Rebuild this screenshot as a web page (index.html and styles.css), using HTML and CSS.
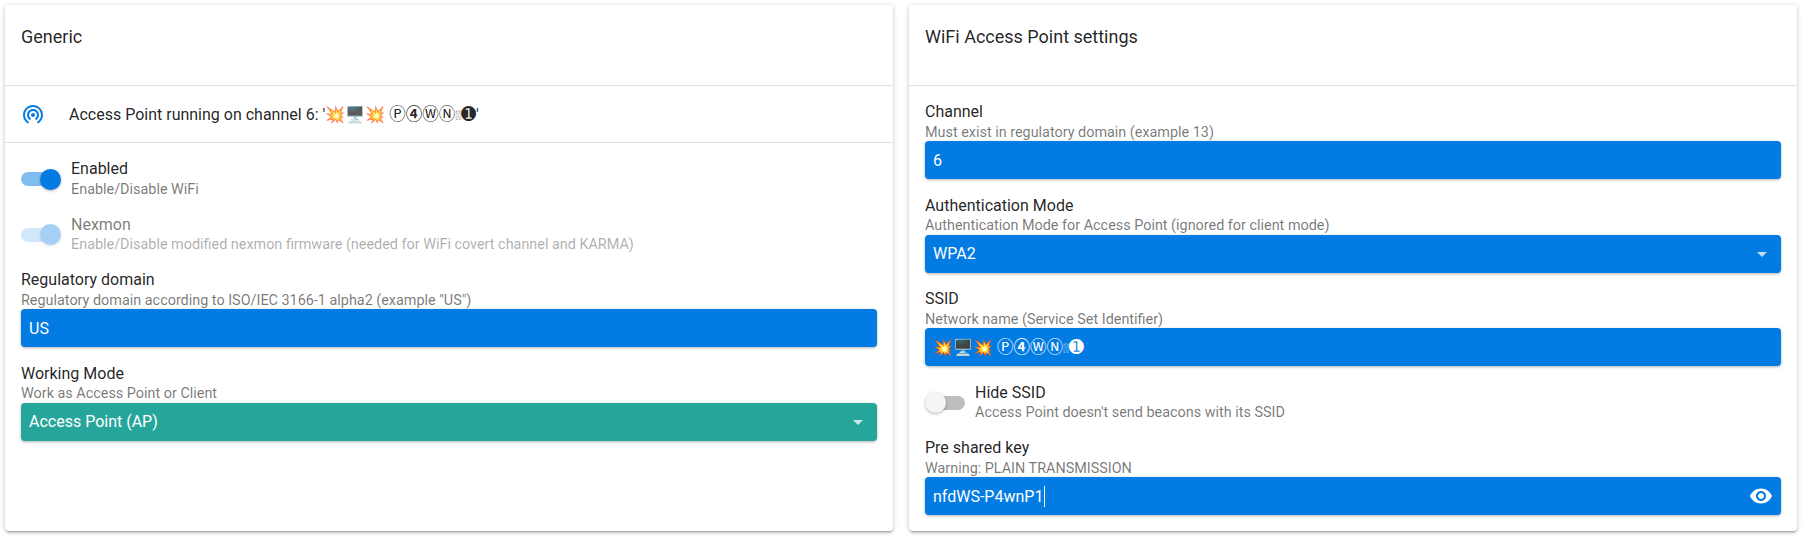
FILE: index.html
```html
<!DOCTYPE html>
<html lang="en">
<head>
<meta charset="utf-8">
<title>WiFi settings</title>
<link rel="stylesheet" href="styles.css">
</head>
<body>
<main class="page">
  <section class="card">
    <header class="card-head">Generic</header>
    <div class="status">
      <svg class="status-icon" viewBox="0 0 24 24"><path d="M12 11c-1.1 0-2 .9-2 2s.9 2 2 2 2-.9 2-2-.9-2-2-2zm6 2c0-3.31-2.69-6-6-6s-6 2.69-6 6c0 2.22 1.21 4.15 3 5.19l1-1.74c-1.19-.7-2-1.97-2-3.45 0-2.21 1.79-4 4-4s4 1.79 4 4c0 1.48-.81 2.75-2 3.45l1 1.74c1.79-1.04 3-2.97 3-5.19zM12 3C6.48 3 2 7.48 2 13c0 3.7 2.01 6.92 4.99 8.65l1-1.73C5.61 18.53 4 15.96 4 13c0-4.42 3.58-8 8-8s8 3.58 8 8c0 2.96-1.61 5.53-4 6.92l1 1.73c2.99-1.73 5-4.95 5-8.65 0-5.52-4.48-10-10-10z"/></svg>
      <span class="status-text">Access Point running on channel 6: '💥🖥️💥 <span class="circled">Ⓟ<b>④</b>ⓌⓃ</span><span class="tofu">&#x2FFFF;</span><span class="neg">➊</span>'</span>
    </div>
    <div class="card-body">
      <div class="toggle-row">
        <span class="toggle on"><span class="track"></span><span class="thumb"></span></span>
        <div><div class="label">Enabled</div><div class="hint">Enable/Disable WiFi</div></div>
      </div>
      <div class="toggle-row disabled">
        <span class="toggle on"><span class="track"></span><span class="thumb"></span></span>
        <div><div class="label">Nexmon</div><div class="hint">Enable/Disable modified nexmon firmware (needed for WiFi covert channel and KARMA)</div></div>
      </div>
      <div class="field">
        <div class="label">Regulatory domain</div>
        <div class="hint">Regulatory domain according to ISO/IEC 3166-1 alpha2 (example "US")</div>
        <div class="input">US</div>
      </div>
      <div class="field">
        <div class="label">Working Mode</div>
        <div class="hint">Work as Access Point or Client</div>
        <div class="input teal">Access Point (AP)<span class="caret"></span></div>
      </div>
    </div>
  </section>
  <section class="card">
    <header class="card-head">WiFi Access Point settings</header>
    <div class="card-body">
      <div class="field">
        <div class="label">Channel</div>
        <div class="hint">Must exist in regulatory domain (example 13)</div>
        <div class="input">6</div>
      </div>
      <div class="field">
        <div class="label">Authentication Mode</div>
        <div class="hint">Authentication Mode for Access Point (ignored for client mode)</div>
        <div class="input">WPA2<span class="caret"></span></div>
      </div>
      <div class="field">
        <div class="label">SSID</div>
        <div class="hint">Network name (Service Set Identifier)</div>
        <div class="input"><span class="status-text">💥🖥️💥 <span class="circled">Ⓟ<b>④</b>ⓌⓃ</span><span class="tofu">&#x2FFFF;</span><span class="neg">➊</span></span></div>
      </div>
      <div class="toggle-row">
        <span class="toggle"><span class="track"></span><span class="thumb"></span></span>
        <div><div class="label">Hide SSID</div><div class="hint">Access Point doesn't send beacons with its SSID</div></div>
      </div>
      <div class="field">
        <div class="label">Pre shared key</div>
        <div class="hint">Warning: PLAIN TRANSMISSION</div>
        <div class="input">nfdWS-P4wnP1<span class="cursor"></span>
          <svg class="eye" viewBox="0 0 24 24"><path d="M12 4.5C7 4.5 2.73 7.61 1 12c1.73 4.39 6 7.5 11 7.5s9.27-3.11 11-7.5c-1.73-4.39-6-7.5-11-7.5zM12 17c-2.76 0-5-2.24-5-5s2.24-5 5-5 5 2.24 5 5-2.24 5-5 5zm0-8c-1.66 0-3 1.34-3 3s1.34 3 3 3 3-1.34 3-3-1.34-3-3-3z"/></svg>
        </div>
      </div>
    </div>
  </section>
</main>
</body>
</html>
```

FILE: styles.css
```css
* { box-sizing: border-box; }
html, body { margin: 0; height: 100%; }
body {
  background: #fff;
  font-family: Roboto, "Noto Sans", sans-serif;
  color: rgba(0, 0, 0, 0.87);
  font-size: 16px;
  overflow: hidden;
}
.page {
  display: grid;
  grid-template-columns: 1fr 1fr;
  gap: 16px;
  padding: 5px 6px 5px 5px;
  height: 536px;
}
.card {
  background: #fff;
  border-radius: 4px;
  box-shadow: 0 1px 5px rgba(0,0,0,.2), 0 2px 2px rgba(0,0,0,.14), 0 3px 1px -2px rgba(0,0,0,.12);
  display: flex;
  flex-direction: column;
}
.card-head {
  height: 81px;
  padding: 19px 16px 0;
  font-size: 18px;
  line-height: 26px;
  border-bottom: 1px solid #e0e0e0;
}
.status {
  height: 57px;
  display: flex;
  align-items: center;
  padding: 0 16px;
  gap: 24px;
  border-bottom: 1px solid #e0e0e0;
}
.status-icon { width: 24px; height: 24px; fill: #027be3; flex: none; }
.status-text { font-size: 16px; line-height: 18px; }
.circled { font-family: "Noto Sans CJK JP", "DejaVu Sans", sans-serif; font-size: 16.5px; line-height: 1; }
.tofu { font-family: Roboto, sans-serif; font-size: 13px; line-height: 1; opacity: 0.6; }
.neg { font-family: "DejaVu Sans", sans-serif; font-size: 18px; line-height: 1; }
.card-body { padding: 13.5px 16px 0; display: flex; flex-direction: column; }
.label { font-size: 16px; line-height: 22px; padding-top: 1.5px; }
.hint { font-size: 14.4px; line-height: 17.5px; padding-top: .5px; color: rgba(0, 0, 0, 0.54); }
.field { margin-bottom: 14px; }
.toggle-row { display: flex; gap: 10px; align-items: flex-start; margin-bottom: 14px; height: 41.5px; }
.toggle-row.disabled .label, .toggle-row.disabled .hint { opacity: 0.6; }
.toggle { position: relative; width: 40px; height: 21px; flex: none; margin-top: 12px; }
.track { position: absolute; left: 6px; top: 3.5px; width: 34px; height: 14px; border-radius: 7px; background: #bdbdbd; }
.thumb { position: absolute; left: 0; top: 0; width: 21px; height: 21px; border-radius: 50%; background: #f5f5f5; box-shadow: 0 1px 3px rgba(0,0,0,.3); }
.toggle.on .track { left: 0; background: rgba(2, 123, 227, 0.5); }
.toggle.on .thumb { left: 19px; background: #027be3; }
.toggle-row.disabled .toggle { opacity: 0.35; }
.input {
  position: relative;
  height: 38px;
  display: flex;
  align-items: center;
  padding: 0 8px;
  background: #027be3;
  color: #fff;
  border-radius: 4px;
  box-shadow: 0 1px 3px rgba(0,0,0,.3);
  font-size: 16px;
}
.input.teal { background: #26a69a; }
.caret {
  position: absolute;
  right: 14px;
  top: 17px;
  border-left: 5px solid transparent;
  border-right: 5px solid transparent;
  border-top: 5px solid rgba(255, 255, 255, 0.75);
}
.cursor { display: inline-block; width: 1px; height: 21px; background: #fff; margin-left: 1px; }
.eye { position: absolute; right: 8px; top: 7px; width: 24px; height: 24px; fill: #fff; }
```
